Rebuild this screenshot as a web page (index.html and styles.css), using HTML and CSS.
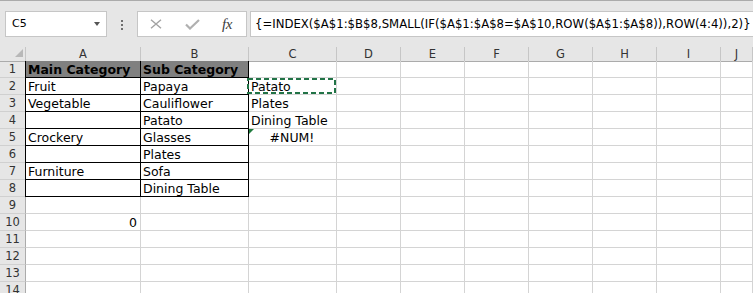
FILE: index.html
```html
<!DOCTYPE html>
<html>
<head>
<meta charset="utf-8">
<title>Sheet</title>
<link rel="stylesheet" href="styles.css">
</head>
<body>
<div class="toolbar">
  <div class="namebox"><span class="nb-text">C5</span><span class="nb-arrow"></span></div>
  <div class="dots"><i></i><i></i><i></i></div>
  <div class="fbtns">
    <svg class="ic-x" width="12" height="10" viewBox="0 0 12 10"><path d="M1 0.7 L11 9.3 M11 0.7 L1 9.3" stroke="#a3a3a3" stroke-width="1.4" fill="none"/></svg>
    <svg class="ic-check" width="15" height="11" viewBox="0 0 15 11"><path d="M1 5.5 L5 9.5 L14 1" stroke="#b0b0b0" stroke-width="2.2" fill="none"/></svg>
    <span class="fx">fx</span>
  </div>
  <div class="formula">{=INDEX($A$1:$B$8,SMALL(IF($A$1:$A$8=$A$10,ROW($A$1:$A$8)),ROW(4:4)),2)}</div>
</div>
<div class="sheet">
  <div class="row hdr">
    <div class="corner"><span class="corner-tri"></span></div>
    <div class="ch">A</div><div class="ch">B</div><div class="ch">C</div><div class="ch">D</div><div class="ch">E</div><div class="ch">F</div><div class="ch">G</div><div class="ch">H</div><div class="ch">I</div><div class="ch">J</div>
  </div>
  <div class="row">
    <div class="rh">1</div><div class="c b l hd">Main Category</div><div class="c b hd">Sub Category</div><div class="c"></div><div class="c"></div><div class="c"></div><div class="c"></div><div class="c"></div><div class="c"></div><div class="c"></div><div class="c"></div>
  </div>
  <div class="row">
    <div class="rh">2</div><div class="c b l">Fruit</div><div class="c b">Papaya</div><div class="c sel">Patato<svg class="ants" width="89" height="16" viewBox="0 0 89 16"><rect x="1" y="1" width="87" height="14" fill="none" stroke="#217346" stroke-width="2" stroke-dasharray="5 3"/></svg></div><div class="c"></div><div class="c"></div><div class="c"></div><div class="c"></div><div class="c"></div><div class="c"></div><div class="c"></div>
  </div>
  <div class="row">
    <div class="rh">3</div><div class="c b l">Vegetable</div><div class="c b">Cauliflower</div><div class="c">Plates</div><div class="c"></div><div class="c"></div><div class="c"></div><div class="c"></div><div class="c"></div><div class="c"></div><div class="c"></div>
  </div>
  <div class="row">
    <div class="rh">4</div><div class="c b l"></div><div class="c b">Patato</div><div class="c">Dining Table</div><div class="c"></div><div class="c"></div><div class="c"></div><div class="c"></div><div class="c"></div><div class="c"></div><div class="c"></div>
  </div>
  <div class="row">
    <div class="rh">5</div><div class="c b l">Crockery</div><div class="c b">Glasses</div><div class="c ctr err"><span class="err-tri"></span>#NUM!</div><div class="c"></div><div class="c"></div><div class="c"></div><div class="c"></div><div class="c"></div><div class="c"></div><div class="c"></div>
  </div>
  <div class="row">
    <div class="rh">6</div><div class="c b l"></div><div class="c b">Plates</div><div class="c"></div><div class="c"></div><div class="c"></div><div class="c"></div><div class="c"></div><div class="c"></div><div class="c"></div><div class="c"></div>
  </div>
  <div class="row">
    <div class="rh">7</div><div class="c b l">Furniture</div><div class="c b">Sofa</div><div class="c"></div><div class="c"></div><div class="c"></div><div class="c"></div><div class="c"></div><div class="c"></div><div class="c"></div><div class="c"></div>
  </div>
  <div class="row">
    <div class="rh">8</div><div class="c b l"></div><div class="c b">Dining Table</div><div class="c"></div><div class="c"></div><div class="c"></div><div class="c"></div><div class="c"></div><div class="c"></div><div class="c"></div><div class="c"></div>
  </div>
  <div class="row">
    <div class="rh">9</div><div class="c"></div><div class="c"></div><div class="c"></div><div class="c"></div><div class="c"></div><div class="c"></div><div class="c"></div><div class="c"></div><div class="c"></div><div class="c"></div>
  </div>
  <div class="row">
    <div class="rh">10</div><div class="c r">0</div><div class="c"></div><div class="c"></div><div class="c"></div><div class="c"></div><div class="c"></div><div class="c"></div><div class="c"></div><div class="c"></div><div class="c"></div>
  </div>
  <div class="row">
    <div class="rh">11</div><div class="c"></div><div class="c"></div><div class="c"></div><div class="c"></div><div class="c"></div><div class="c"></div><div class="c"></div><div class="c"></div><div class="c"></div><div class="c"></div>
  </div>
  <div class="row">
    <div class="rh">12</div><div class="c"></div><div class="c"></div><div class="c"></div><div class="c"></div><div class="c"></div><div class="c"></div><div class="c"></div><div class="c"></div><div class="c"></div><div class="c"></div>
  </div>
  <div class="row">
    <div class="rh">13</div><div class="c"></div><div class="c"></div><div class="c"></div><div class="c"></div><div class="c"></div><div class="c"></div><div class="c"></div><div class="c"></div><div class="c"></div><div class="c"></div>
  </div>
  <div class="row">
    <div class="rh">14</div><div class="c"></div><div class="c"></div><div class="c"></div><div class="c"></div><div class="c"></div><div class="c"></div><div class="c"></div><div class="c"></div><div class="c"></div><div class="c"></div>
  </div>
</div>
</body>
</html>
```
FILE: styles.css
```css
html, body {
  margin: 0;
  padding: 0;
}
body {
  width: 753px;
  height: 293px;
  overflow: hidden;
  background: #ffffff;
  font-family: "DejaVu Sans", Verdana, sans-serif;
  color: #000;
}
*, *::before, *::after {
  box-sizing: border-box;
}

/* ---------- toolbar ---------- */
.toolbar {
  display: flex;
  align-items: flex-start;
  height: 47px;
  border-top: 1px solid #ababab;
  background: #e6e6e6;
  padding: 10px 0 0 5px;
  overflow: hidden;
}
.namebox {
  flex: none;
  width: 102px;
  height: 26px;
  background: #fff;
  border: 1px solid #c6c6c6;
  display: flex;
  align-items: center;
  justify-content: space-between;
  padding: 0 6px 0 6px;
  font-size: 11px;
  line-height: 24px;
}
.nb-arrow {
  width: 0;
  height: 0;
  border-left: 3.5px solid transparent;
  border-right: 3.5px solid transparent;
  border-top: 4px solid #555;
}
.dots {
  flex: none;
  display: flex;
  flex-direction: column;
  gap: 2px;
  margin: 9px 14px 0 14px;
}
.dots i {
  display: block;
  width: 2px;
  height: 2px;
  background: #6f6f6f;
}
.fbtns {
  flex: none;
  width: 110px;
  height: 26px;
  background: #fff;
  border: 1px solid #c6c6c6;
  display: flex;
  align-items: center;
  padding-left: 12px;
}
.ic-x {
  display: block;
}
.ic-check {
  display: block;
  margin-left: 23px;
}
.fx {
  margin-left: 22px;
  font-family: "Liberation Serif", serif;
  font-style: italic;
  font-size: 15px;
  color: #3c3c3c;
  line-height: 24px;
  letter-spacing: -0.5px;
}
.formula {
  flex: 1;
  margin-left: 3px;
  margin-right: -30px;
  height: 26px;
  background: #fff;
  border: 1px solid #c6c6c6;
  padding-left: 4px;
  font-size: 11.7px;
  line-height: 24px;
  white-space: nowrap;
  overflow: hidden;
}

/* ---------- sheet ---------- */
.row {
  display: grid;
  grid-template-columns: 26px 115px 108px 88px repeat(6, 64px) 1fr;
  height: 17px;
}
.row.hdr {
  height: 14px;
}
.corner {
  position: relative;
  background: #e6e6e6;
  border-right: 1px solid #c6c6c6;
  border-bottom: 1px solid #ababab;
}
.corner-tri {
  position: absolute;
  left: 15px;
  top: 2px;
  width: 0;
  height: 0;
  border-left: 8px solid transparent;
  border-bottom: 8px solid #b8b8b8;
}
.ch {
  background: #e6e6e6;
  border-right: 1px solid #c6c6c6;
  border-bottom: 1px solid #ababab;
  text-align: center;
  font-size: 11.5px;
  line-height: 14px;
  color: #333;
}
.rh {
  background: #e6e6e6;
  border-right: 1px solid #ababab;
  border-bottom: 1px solid #d0d0d0;
  text-align: center;
  font-size: 11.5px;
  line-height: 15px;
  padding-top: 1px;
  color: #333;
}
.c {
  position: relative;
  border-right: 1px solid #d4d4d4;
  border-bottom: 1px solid #d4d4d4;
  padding: 1px 3px 0 2px;
  font-size: 12.5px;
  line-height: 15px;
  white-space: nowrap;
}
.c.b {
  border-right-color: #000;
  border-bottom-color: #000;
}
.c.l {
  box-shadow: -1px 0 0 #000;
}
.c.hd {
  background: #808080;
  font-weight: bold;
}
.c.r {
  text-align: right;
}
.c.ctr {
  text-align: center;
}
.ants {
  position: absolute;
  left: -2px;
  top: 0;
}
.err-tri {
  position: absolute;
  left: 0;
  top: 0;
  width: 0;
  height: 0;
  border-top: 5px solid #1e7b3c;
  border-right: 5px solid transparent;
}
```
